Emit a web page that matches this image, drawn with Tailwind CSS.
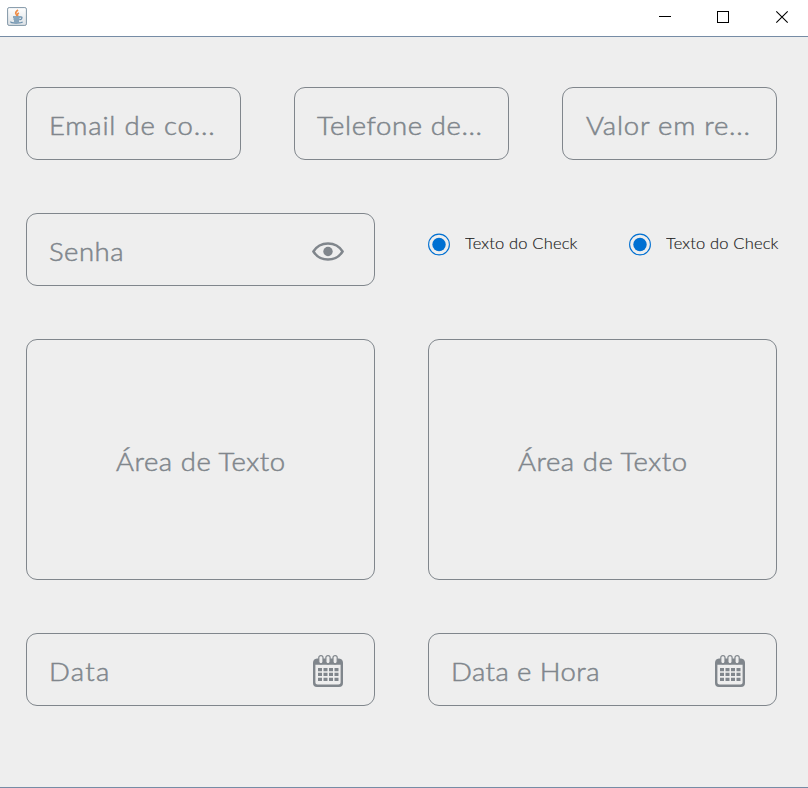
<!DOCTYPE html>
<html lang="pt-BR">
<head>
<meta charset="utf-8">
<title>Formulário</title>
<script src="https://cdn.jsdelivr.net/npm/@tailwindcss/browser@4"></script>
</head>
<body class="w-[808px] h-[788px] overflow-hidden bg-[#eeeeee] flex flex-col font-['Century_Gothic','Lato',sans-serif] font-light">
<svg class="hidden">
  <symbol id="calendar" viewBox="0 0 30 33" preserveAspectRatio="none">
    <path d="M4 3.5H26Q30 4 30 8V29Q30 33 26 33H4Q0 33 0 29V8Q0 4 4 3.5ZM2.4 10V28.4Q2.4 30.5 4.500 30.500H25.500Q27.600 30.500 27.600 28.400V10Z" fill="#80868c" fill-rule="evenodd"/>
    <g fill="#eeeeee" stroke="#80868c" stroke-width="1.2">
      <rect x="5.800" y=".6" width="4.200" height="8.500" rx="2.100"/><rect x="12.900" y=".6" width="4.200" height="8.500" rx="2.100"/><rect x="20" y=".6" width="4.200" height="8.500" rx="2.100"/>
    </g>
    <path d="M5 15H26M5 20H26M5 25.200H26" stroke="#80868c" stroke-width="3.400" stroke-dasharray="4 1.500"/>
  </symbol>
</svg>
<header class="h-[37px] shrink-0 bg-white border-b border-[#768ca5] flex justify-between">
  <svg class="ml-[7px] mt-[7px]" width="20" height="19" viewBox="0 0 20 19">
    <defs><linearGradient id="tile" x2="0" y2="1"><stop stop-color="#fff"/><stop offset="1" stop-color="#dce1e5"/></linearGradient></defs>
    <rect x=".6" y=".6" width="18.800" height="17.800" rx="1.500" fill="url(#tile)" stroke="#8096a6"/>
    <path d="M11 3Q7.500 5.500 9.300 7.500L10 9M12 6Q9.500 7 11 9" fill="none" stroke="#ef8d48" stroke-width="1.700"/>
    <path d="M6 10H13M6.500 12H12.500M7 14H12M13 10Q16 9.500 14.500 12L12.500 13M4 14.500Q3 16 9 16T15.500 14.700" fill="none" stroke="#6a8fac" stroke-width="1.300"/>
  </svg>
  <svg class="mr-[19px] mt-[10px]" width="130" height="14" viewBox="0 0 130 14" fill="none" stroke="#000">
    <path d="M0 6.500H12" shape-rendering="crispEdges"/>
    <rect x="58.500" y="1.500" width="11" height="11" shape-rendering="crispEdges"/>
    <path d="M117.300 1.300L128.700 12.700M128.700 1.300L117.300 12.700" stroke-width="1.100"/>
  </svg>
</header>
<main class="flex-1 flex flex-col gap-[53px] pt-[50px] pl-[26px] pr-[31px] border-b border-[#768ca5] text-[25px] leading-[30px] text-[#80868c] whitespace-nowrap [-webkit-text-stroke:0.5px]">
  <section class="grid grid-cols-3 gap-[53px] h-[73px] shrink-0">
    <div class="border border-[#80868c] rounded-[11px] pl-[22px] pt-[22px]"><span class="inline-block origin-left scale-x-110 tracking-[0.75px]">Email de co...</span></div>
    <div class="border border-[#80868c] rounded-[11px] pl-[22px] pt-[22px]"><span class="inline-block origin-left scale-x-110 tracking-[0.55px]">Telefone de...</span></div>
    <div class="border border-[#80868c] rounded-[11px] pl-[23px] pt-[22px]"><span class="inline-block origin-left scale-x-110 tracking-[0.7px]">Valor em re...</span></div>
  </section>
  <section class="grid grid-cols-2 gap-[53px] h-[73px] shrink-0">
    <div class="border border-[#80868c] rounded-[11px] pl-[22px] pr-[30px] pt-[22px] flex justify-between">
      <span class="origin-left scale-x-110 tracking-[0.45px]">Senha</span>
      <svg class="mt-[6px]" width="32" height="19" viewBox="0 0 32 19"><path d="M1.400 9.500C8-1.200 24-1.200 30.600 9.500C24 20.200 8 20.200 1.400 9.500Z" fill="none" stroke="#80868c" stroke-width="2.400"/><circle cx="16" cy="9.500" r="4.700" fill="#80868c"/></svg>
    </div>
    <div class="flex text-[15px] leading-[20px] text-[#222222] pt-[20px] [-webkit-text-stroke:0.15px]">
      <div class="w-[201px] flex shrink-0">
        <svg width="22" height="23" viewBox="0 0 22 23"><circle cx="11" cy="11.500" r="10.400" fill="none" stroke="#0070d2" stroke-width="1.100"/><circle cx="11" cy="11.500" r="6.700" fill="#0070d2"/></svg>
        <div class="ml-[15px] w-[113px] overflow-hidden"><span class="inline-block origin-left scale-x-110 tracking-[0.15px]">Texto do Check</span></div>
      </div>
      <div class="flex shrink-0">
        <svg width="22" height="23" viewBox="0 0 22 23"><circle cx="11" cy="11.500" r="10.400" fill="none" stroke="#0070d2" stroke-width="1.100"/><circle cx="11" cy="11.500" r="6.700" fill="#0070d2"/></svg>
        <div class="ml-[15px] w-[113px] overflow-hidden"><span class="inline-block origin-left scale-x-110 tracking-[0.15px]">Texto do Check</span></div>
      </div>
    </div>
  </section>
  <section class="grid grid-cols-2 gap-[53px] h-[241px] shrink-0">
    <div class="border border-[#80868c] rounded-[11px] pl-[89px] pt-[106px]"><span class="inline-block origin-left scale-x-110 tracking-[0.5px]">Área de Texto</span></div>
    <div class="border border-[#80868c] rounded-[11px] pl-[89px] pt-[106px]"><span class="inline-block origin-left scale-x-110 tracking-[0.5px]">Área de Texto</span></div>
  </section>
  <section class="grid grid-cols-2 gap-[53px] h-[73px] shrink-0">
    <div class="border border-[#80868c] rounded-[11px] pl-[22px] pr-[31px] pt-[22px] flex justify-between">
      <span class="origin-left scale-x-110 tracking-[1.2px]">Data</span>
      <svg class="-mt-[1px]" width="30" height="32"><use href="#calendar" width="30" height="32"/></svg>
    </div>
    <div class="border border-[#80868c] rounded-[11px] pl-[22px] pr-[31px] pt-[22px] flex justify-between">
      <span class="origin-left scale-x-110 tracking-[0.4px]">Data e Hora</span>
      <svg class="-mt-[1px]" width="30" height="32"><use href="#calendar" width="30" height="32"/></svg>
    </div>
  </section>
</main>
</body>
</html>
